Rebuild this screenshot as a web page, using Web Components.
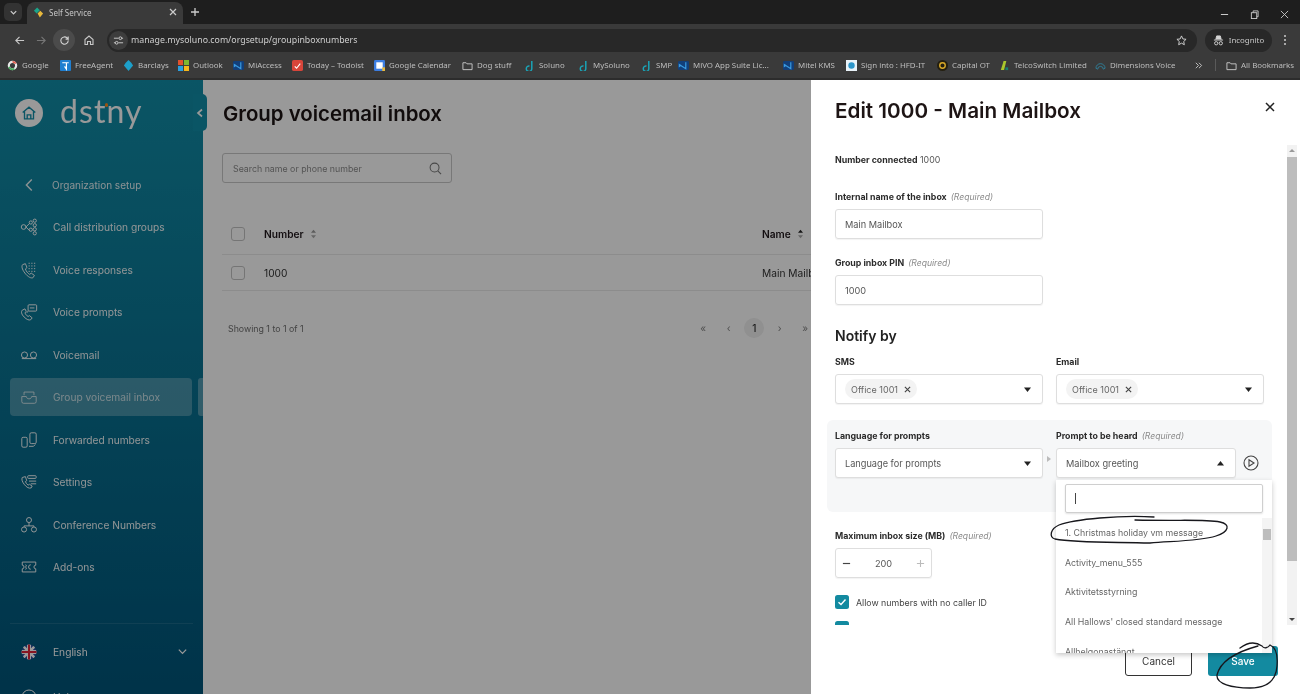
<!DOCTYPE html>
<html lang="en">
<head>
<meta charset="utf-8">
<title>Self Service</title>
<style>
    html, body { margin: 0; height: 100%; overflow: hidden; background: #fff; font-family: Inter, "Liberation Sans", sans-serif; }
</style>
</head>
<body>
<app-shell>
    <browser-chrome slot="chrome"></browser-chrome>
    <side-nav slot="nav">
        <nav-item icon="back" plain>Organization setup</nav-item>
        <nav-item icon="groups">Call distribution groups</nav-item>
        <nav-item icon="responses">Voice responses</nav-item>
        <nav-item icon="prompts">Voice prompts</nav-item>
        <nav-item icon="voicemail">Voicemail</nav-item>
        <nav-item icon="inbox" active>Group voicemail inbox</nav-item>
        <nav-item icon="forward">Forwarded numbers</nav-item>
        <nav-item icon="settings">Settings</nav-item>
        <nav-item icon="conference">Conference Numbers</nav-item>
        <nav-item icon="addons">Add-ons</nav-item>
    </side-nav>
    <inbox-page slot="main"></inbox-page>
    <edit-drawer slot="drawer"></edit-drawer>
    <ink-marks slot="ink"></ink-marks>
</app-shell>

<script>
const ICONS = {
    back: '<path d="M12 4l-6 6 6 6"/>',
    groups: '<circle cx="4" cy="10" r="2.6"/><path d="M6.6 10l4-4M6.6 10l4 4"/><circle cx="12" cy="5" r="1.8"/><circle cx="16.4" cy="3" r="1.8"/><circle cx="16.4" cy="8" r="1.8"/><circle cx="12" cy="13" r="1.8"/><circle cx="16.4" cy="12.5" r="1.8"/><circle cx="16.4" cy="17" r="1.8"/>',
    responses: '<path d="M3 4c-1.5 1.500-1 5 2.500 9.500s7 6 9 5l1.500-2.500-3.500-2.500-1.800 1.300c-2-1-4-3.500-4.700-6l1.800-1.500L6 3z"/><path stroke-dasharray="1.400 1.600" d="M9.500 2.500h8M9.500 5.500h8M9.500 8.500h8M9.500 11.500h8"/>',
    prompts: '<path d="M2.500 8c-1.500 1.500-1 4.500 2 7.500s5.500 4 7.500 3l1.500-2-3-2.500-1.500 1c-1.500-.8-3-2.500-3.500-4.200l1.500-1.300L5.500 6.500z"/><rect x="9" y="2" width="9.500" height="7" rx="1"/><path d="M9 9l-1.500 2M11 5.500h5"/>',
    voicemail: '<circle cx="5" cy="10" r="3.400"/><circle cx="15" cy="10" r="3.400"/><path d="M2 14h16"/>',
    inbox: '<path d="M4.500 8V4.500h11V8"/><path d="M2 9.500h5c.5 2 1.500 2.500 3 2.500s2.500-.5 3-2.500h5V15a2 2 0 0 1-2 2H4a2 2 0 0 1-2-2z"/>',
    forward: '<rect x="2" y="7" width="6" height="11" rx="1.500"/><rect x="11" y="2" width="7" height="12" rx="1.500"/><path d="M10 17h5l2-2"/>',
    settings: '<path d="M2.500 5c-1 2 0 5 2.500 8s5 4.500 7.500 3.500l1-2-3-2-1.500 1c-1.500-1-2.500-2.500-3-4l1.500-1L6 4z"/><rect x="8.500" y="3" width="9.500" height="3" rx="1"/><path d="M10 9h8M12 12h6"/>',
    conference: '<circle cx="10" cy="4.500" r="2.800"/><circle cx="4.500" cy="15" r="2.800"/><circle cx="15.500" cy="15" r="2.800"/><path d="M10 7.500V11M4.500 12V11h11v1"/>',
    addons: '<path d="M2.500 4.500h15v3.500a2 2 0 0 0 0 4v3.500h-15V12a2 2 0 0 0 0-4z"/><path d="M12 7.500a2.500 2.500 0 1 0 0 5"/><path d="M6 7.500c1.500 0 1.500 2 0 2.500 1.500.5 1.500 2.500 0 2.500"/>'
}

class AppShell extends HTMLElement {
    connectedCallback() {
        this.attachShadow({ mode: 'open' }).innerHTML = `
        <style>
            :host { display: flex; flex-direction: column; width: 1300px; height: 694px; position: relative; overflow: hidden; filter: blur(.5px); }
            .body { flex: 1; display: flex; min-height: 0; position: relative; }
            .scrim { position: absolute; left: 0; right: 0; top: 0; bottom: 0; background: rgba(0,0,0,.4); }
        </style>
        <slot name="chrome"></slot>
        <div class="body">
            <slot name="nav"></slot>
            <slot name="main"></slot>
            <div class="scrim"></div>
            <slot name="drawer"></slot>
        </div>
        <slot name="ink"></slot>
        `
    }
}
customElements.define('app-shell', AppShell)

class BookMark extends HTMLElement {
    connectedCallback() {
        this.attachShadow({ mode: 'open' }).innerHTML = `
        <style>
            :host { display: flex; align-items: center; gap: 4px; flex: none; width: ${this.getAttribute('w')}px; color: #bdbdbd; font-size: 7.9px; white-space: nowrap; overflow: hidden; }
            .ic { width: 11px; height: 11px; flex: none; display: block; }
        </style>
        <svg class="ic" viewBox="0 0 12 12">${this.getAttribute('art') || ''}</svg>
        <slot></slot>
        `
    }
}
customElements.define('book-mark', BookMark)

class BrowserChrome extends HTMLElement {
    connectedCallback() {
        const solu = '<path d="M8.500 1v8.500a3 3 0 1 1-2.500-3" fill="none" stroke="#1aa5b8" stroke-width="1.600"/>'
        const vs = '<rect x="0" y="1" width="12" height="10" rx="1.500" fill="#123f7a"/><path d="M8.500 2.500v7L3 6l-1.500 1V5L3 6" fill="none" stroke="#3a9be0" stroke-width="1.300"/>'
        const folder = '<path d="M1 3h3.500l1 1.200H11V10.500H1z" fill="none" stroke="#c9c9c9" stroke-width="1"/>'
        this.attachShadow({ mode: 'open' }).innerHTML = `
        <style>
            :host { display: block; flex: none; height: 80px; background: #3a3a3a; font-family: "Noto Sans", "Liberation Sans", sans-serif; color: #c6c6c6; }
            svg { display: block; flex: none; }
            .strip { height: 24px; background: #1e1e1e; display: flex; align-items: flex-end; padding-left: 4px; box-sizing: border-box; }
            .drop { width: 18px; height: 18px; margin-bottom: 3px; background: #333; border-radius: 5px; display: flex; align-items: center; justify-content: center; }
            .tab { width: 156px; height: 22px; margin-left: 5px; background: #3a3a3a; border-radius: 8px 8px 0 0; display: flex; align-items: center; box-sizing: border-box; padding: 0 6px 2px; font-size: 8px; gap: 5px; }
            .tab span { flex: 1; }
            .plus { margin: 0 0 7px 7px; }
            .win { margin-left: auto; display: flex; align-items: center; gap: 21px; padding: 0 11px 5px 0; }
            .tools { height: 32px; display: flex; align-items: center; padding-left: 8px; box-sizing: border-box; }
            .round { width: 22px; height: 22px; border-radius: 50%; display: flex; align-items: center; justify-content: center; }
            .reload { background: #4b4b4b; margin: 0 3px 0 1px; }
            .address { width: 1090px; margin-left: 7px; height: 23px; background: #282828; border-radius: 12px; display: flex; align-items: center; font-size: 8.8px; color: #cfcfcf; box-sizing: border-box; padding: 0 9px 0 2px; gap: 3px; }
            .address .tune { width: 19px; height: 19px; background: #3d3d3d; }
            .address span { flex: 1; }
            .incog { margin-left: 8px; width: 67px; height: 23px; background: #282828; border-radius: 12px; display: flex; align-items: center; justify-content: center; gap: 5px; font-size: 7.9px; }
            .marks { height: 18px; display: flex; align-items: center; padding-left: 7px; box-sizing: border-box; }
            .sep { width: 1px; height: 12px; background: #5a5a5a; margin: 0 10px 0 12px; flex: none; }
            .line { height: 2px; margin-top: 4px; background: #2c2c2c; }
        </style>
        <div class="strip">
            <div class="drop"><svg width="9" height="9" viewBox="0 0 10 10"><path d="M2 3.500l3 3 3-3" fill="none" stroke="#ccc" stroke-width="1.400"/></svg></div>
            <div class="tab">
                <svg width="11" height="11" viewBox="0 0 12 12"><path d="M1 4l3.500-3.500 3 3L4 7z" fill="#1ba58a"/><path d="M5 7l3-3 3 3-3.500 4.500z" fill="#e8b93c"/></svg>
                <span>Self Service</span>
                <svg width="8" height="8" viewBox="0 0 8 8"><path d="M1 1l6 6M7 1L1 7" stroke="#ccc" stroke-width="1.200"/></svg>
            </div>
            <svg class="plus" width="10" height="10" viewBox="0 0 10 10"><path d="M5 1v8M1 5h8" stroke="#ccc" stroke-width="1.300"/></svg>
            <div class="win">
                <svg width="9" height="9" viewBox="0 0 10 10"><path d="M1 5h8" stroke="#ccc" stroke-width="1.100"/></svg>
                <svg width="9" height="9" viewBox="0 0 10 10"><rect x="1.500" y="3" width="6" height="6.500" fill="none" stroke="#ccc"/><path d="M3.500 3V1H9v6.500H7.500" fill="none" stroke="#ccc"/></svg>
                <svg width="9" height="9" viewBox="0 0 10 10"><path d="M1 1l8 8M9 1L1 9" stroke="#ccc" stroke-width="1"/></svg>
            </div>
        </div>
        <div class="tools">
            <div class="round"><svg width="11" height="11" viewBox="0 0 12 12"><path d="M11 6H2M6 2L2 6l4 4" fill="none" stroke="#c8c8c8" stroke-width="1.200"/></svg></div>
            <div class="round"><svg width="11" height="11" viewBox="0 0 12 12"><path d="M1 6h9M6 2l4 4-4 4" fill="none" stroke="#767676" stroke-width="1.200"/></svg></div>
            <div class="round reload"><svg width="11" height="11" viewBox="0 0 12 12"><path d="M10 6a4 4 0 1 1-1.200-2.800L10 4.500V1.500M10 4.500H7.200" fill="none" stroke="#d4d4d4" stroke-width="1.200"/></svg></div>
            <div class="round"><svg width="12" height="12" viewBox="0 0 12 12"><path d="M2 5.500L6 2l4 3.500V10.500H7.500V7.500h-3v3H2z" fill="none" stroke="#c8c8c8" stroke-width="1.100"/></svg></div>
            <div class="address">
                <div class="round tune"><svg width="11" height="11" viewBox="0 0 12 12"><path d="M1 3.500h5M9.500 3.500H11M1 8.500h1.500M6 8.500h5" stroke="#d0d0d0"/><circle cx="8" cy="3.500" r="1.500" fill="none" stroke="#d0d0d0"/><circle cx="4" cy="8.500" r="1.500" fill="none" stroke="#d0d0d0"/></svg></div>
                <span>manage.mysoluno.com/orgsetup/groupinboxnumbers</span>
                <svg style="margin-right:1px" width="11" height="11" viewBox="0 0 12 12"><path d="M6 1l1.500 3.300 3.500.4-2.600 2.400.7 3.500L6 8.900l-3.100 1.700.7-3.500L1 4.700l3.500-.4z" fill="none" stroke="#d8d8d8"/></svg>
            </div>
            <div class="incog">
                <svg width="11" height="11" viewBox="0 0 12 12"><path d="M1 5.500h10M3 5l1-4h4l1 4" fill="#d4d4d4" stroke="#d4d4d4"/><circle cx="3.500" cy="9" r="1.800" fill="none" stroke="#d4d4d4"/><circle cx="8.500" cy="9" r="1.800" fill="none" stroke="#d4d4d4"/></svg>
                <span>Incognito</span>
            </div>
            <svg style="margin-left:11px" width="4" height="12" viewBox="0 0 4 12"><circle cx="2" cy="2" r="1" fill="#ccc"/><circle cx="2" cy="6" r="1" fill="#ccc"/><circle cx="2" cy="10" r="1" fill="#ccc"/></svg>
        </div>
        <div class="marks">
            <book-mark w="53" art='<circle cx="6" cy="6" r="4" fill="none" stroke="#e8e8e8" stroke-width="2.400"/><path d="M6 2a4 4 0 0 1 3.500 2" stroke="#e25b4b" stroke-width="2" fill="none"/><path d="M2.200 7.500A4 4 0 0 0 8 9.500" stroke="#4aa860" stroke-width="2" fill="none"/>'>Google</book-mark>
            <book-mark w="63" art='<rect width="12" height="12" rx="1" fill="#1f7fd1"/><path d="M2.500 3h7M7 3v7l-2-3" stroke="#fff" stroke-width="1.300" fill="none"/>'>FreeAgent</book-mark>
            <book-mark w="55" art='<path d="M6 0l3 3 2 3-5 6-5-6 2-3z" fill="#1d9fc9"/>'>Barclays</book-mark>
            <book-mark w="55" art='<rect width="5.500" height="5.500" fill="#e2512c"/><rect x="6.500" width="5.500" height="5.500" fill="#7eb72f"/><rect y="6.500" width="5.500" height="5.500" fill="#2a9fe0"/><rect x="6.500" y="6.500" width="5.500" height="5.500" fill="#f5b71c"/>'>Outlook</book-mark>
            <book-mark w="59" art='${vs}'>MiAccess</book-mark>
            <book-mark w="82" art='<rect width="12" height="12" rx="2" fill="#d8453a"/><path d="M3 7l2 2 4-5" stroke="#fff" fill="none" stroke-width="1.200"/>'>Today – Todoist</book-mark>
            <book-mark w="88" art='<rect width="12" height="12" rx="1.500" fill="#3c7de0"/><rect x="2.500" y="2.500" width="7" height="7" fill="#fff"/><rect x="9" y="8" width="3" height="4" fill="#e8b93c"/>'>Google Calendar</book-mark>
            <book-mark w="62" art='${folder}'>Dog stuff</book-mark>
            <book-mark w="54" art='${solu}'>Soluno</book-mark>
            <book-mark w="63" art='${solu}'>MySoluno</book-mark>
            <book-mark w="37" art='${solu}'>SMP</book-mark>
            <book-mark w="105" art='${vs}'>MiVO App Suite Lic...</book-mark>
            <book-mark w="63" art='${vs}'>Mitel KMS</book-mark>
            <book-mark w="91" art='<rect width="12" height="12" fill="#e8f2f8"/><circle cx="6" cy="6" r="3.500" fill="#2b95c9"/>'>Sign into : HFD-IT</book-mark>
            <book-mark w="62" art='<circle cx="6" cy="6" r="6" fill="#241f10"/><circle cx="6" cy="6" r="3" fill="none" stroke="#d9a928" stroke-width="1.500"/>'>Capital OT</book-mark>
            <book-mark w="96" art='<path d="M2 11L5 1h3L5.500 11z" fill="#a9c72c"/><rect x="7" y="8" width="3" height="3" fill="#16806f"/>'>TelcoSwitch Limited</book-mark>
            <book-mark w="99" art='<path d="M1 9a5 5 0 0 1 10 0l-2 1a3 3 0 0 0-6 0z" fill="none" stroke="#2f7f99"/>'>Dimensions Voice</book-mark>
            <svg width="9" height="9" viewBox="0 0 10 10"><path d="M2 2l3 3-3 3M5.500 2l3 3-3 3" fill="none" stroke="#ccc"/></svg>
            <div class="sep"></div>
            <book-mark w="70" art='${folder}'>All Bookmarks</book-mark>
        </div>
        <div class="line"></div>
        `
    }
}
customElements.define('browser-chrome', BrowserChrome)

class NavItem extends HTMLElement {
    connectedCallback() {
        const plain = this.hasAttribute('plain')
        this.attachShadow({ mode: 'open' }).innerHTML = `
        <style>
            :host { display: flex; align-items: center; height: 38px; border-radius: 4px; padding-left: 9.5px; gap: 15.5px; box-sizing: border-box; color: rgba(255,255,255,.95); font-size: 10.2px; white-space: nowrap; }
            :host([active]) { background: rgba(255,255,255,.26); color: rgba(255,255,255,.72); }
            :host([plain]) { font-size: 10px; color: rgba(255,255,255,.9); padding-left: 10.5px; gap: 13.5px; }
            svg { width: 18px; height: 18px; fill: none; stroke: currentColor; stroke-width: ${plain ? 1.6 : 1.1}; display: block; flex: none; }
        </style>
        <svg viewBox="0 0 20 20">${ICONS[this.getAttribute('icon')]}</svg>
        <slot></slot>
        `
    }
}
customElements.define('nav-item', NavItem)

class SideNav extends HTMLElement {
    connectedCallback() {
        this.attachShadow({ mode: 'open' }).innerHTML = `
        <style>
            :host { display: flex; flex-direction: column; flex: none; width: 203px; height: 100%; position: relative; box-sizing: border-box; background: linear-gradient(180deg, #128ea8 0%, #00557a 100%); color: #fff; overflow: visible; }
            .brand { height: 85.5px; display: flex; align-items: center; padding: 0 0 19px 15px; box-sizing: border-box; gap: 17px; flex: none; }
            .home { width: 28px; height: 28px; border-radius: 50%; background: #fff; display: flex; align-items: center; justify-content: center; }
            .word { font: 400 32px/1 Lato, "Liberation Sans", sans-serif; letter-spacing: 1.100px; position: relative; margin-top: -4px; }
            .dot { position: absolute; left: 44.5px; top: 8px; width: 3.500px; height: 3.500px; border-radius: 50%; background: #ff8a1e; }
            nav { display: flex; flex-direction: column; gap: 4.500px; padding: 0 11px 0 10px; flex: none; }
            .foot { flex: none; margin: 36.5px 10px 0; border-top: 1px solid rgba(255,255,255,.1); height: 56px; display: flex; align-items: center; padding: 0 5px 0 11px; gap: 16px; font-size: 10.200px; }
            .foot span { flex: 1; }
            .help { flex: none; display: flex; align-items: center; gap: 16px; padding-left: 21px; margin-top: 9px; font-size: 10.200px; }
            .handle { position: absolute; left: 193px; top: 14px; width: 14px; height: 37px; background: #128ea8; border-radius: 0 5px 5px 0; display: flex; align-items: center; justify-content: center; }
            .rail { position: absolute; left: 198px; top: 298px; width: 5px; height: 38px; background: rgba(255,255,255,.3); border-radius: 3px 0 0 3px; }
        </style>
        <div class="brand">
            <div class="home"><svg width="18" height="18" viewBox="0 0 20 20"><path d="M3 9.500L10 3.500l7 6M5 8v8.500h10V8M8 16.500V12h4v4.500" fill="none" stroke="#128ea8" stroke-width="1.500"/></svg></div>
            <div class="word">dstny<i class="dot"></i></div>
        </div>
        <nav><slot></slot></nav>
        <div class="foot">
            <svg width="16" height="16" viewBox="0 0 16 16"><defs><clipPath id="fc"><circle cx="8" cy="8" r="7.500"/></clipPath></defs><g clip-path="url(#fc)"><rect width="16" height="16" fill="#2d4f9e"/><path d="M0 0l16 16M16 0L0 16" stroke="#fff" stroke-width="2.500"/><path d="M8 0v16M0 8h16" stroke="#fff" stroke-width="4"/><path d="M8 0v16M0 8h16" stroke="#e0263a" stroke-width="2"/></g></svg>
            <span>English</span>
            <svg width="11" height="11" viewBox="0 0 12 12"><path d="M2 4l4 4 4-4" fill="none" stroke="#fff" stroke-width="1.400"/></svg>
        </div>
        <div class="help"><svg width="16" height="16" viewBox="0 0 16 16"><circle cx="8" cy="8" r="7" fill="none" stroke="#fff"/></svg><span>Help</span></div>
        <div class="handle"><svg width="10" height="10" viewBox="0 0 10 10"><path d="M7 1.500L3 5l4 3.500" fill="none" stroke="#fff" stroke-width="1.700"/></svg></div>
        <div class="rail"></div>
        `
    }
}
customElements.define('side-nav', SideNav)

class InboxPage extends HTMLElement {
    connectedCallback() {
        const sort = up => `<svg width="7" height="10" viewBox="0 0 8 12"><path d="M4 1l3 3.500H1z" fill="${up ? '#222' : '#999'}"/><path d="M4 11L1 7.500h6z" fill="#aaa"/></svg>`
        this.attachShadow({ mode: 'open' }).innerHTML = `
        <style>
            :host { display: block; flex: 1; min-width: 0; background: #fff; padding: 20px 0 0 19px; box-sizing: border-box; color: #222; overflow: hidden; }
            h1 { font-size: 20.4px; line-height: 28px; font-weight: 600; margin: 0 0 25px 1px; color: #1d1414; }
            .search { width: 230px; height: 30px; border: 1px solid #c8c8c8; border-radius: 3px; display: flex; align-items: center; justify-content: space-between; box-sizing: border-box; padding: 0 9px 0 10px; font-size: 8.800px; color: #8c8c8c; }
            .grid { width: 600px; display: grid; grid-template-columns: 42px 498px 60px; align-items: center; border-bottom: 1px solid #eaeaea; box-sizing: border-box; white-space: nowrap; font-size: 10.200px; }
            .head { margin-top: 31px; height: 41px; font-weight: 600; color: #20171b; }
            .row { height: 36px; color: #333; }
            .box { width: 14px; height: 14px; margin-left: 9px; border: 1px solid #c4c4c4; border-radius: 3px; box-sizing: border-box; }
            .lab { display: flex; align-items: center; gap: 6px; }
            .pagebar { width: 596px; display: flex; justify-content: space-between; align-items: center; height: 26px; margin-top: 24px; padding-left: 6px; box-sizing: border-box; font-size: 8.800px; color: #6f6f6f; }
            .pager { display: flex; position: relative; z-index: 0; }
            .pager b { width: 25.500px; height: 20px; display: flex; align-items: center; justify-content: center; font-weight: 400; font-size: 10px; color: #888; position: relative; }
            .pager b.on { color: #333; font-weight: 500; }
            .pager b.on::before { content: ""; position: absolute; left: 2.750px; top: 0; width: 20px; height: 20px; border-radius: 50%; background: #f0f0f0; z-index: -1; }
        </style>
        <h1>Group voicemail inbox</h1>
        <div class="search">
            <span>Search name or phone number</span>
            <svg width="13" height="13" viewBox="0 0 14 14"><circle cx="6" cy="6" r="4.800" fill="none" stroke="#777" stroke-width="1.100"/><path d="M9.500 9.500L13 13" stroke="#777" stroke-width="1.100"/></svg>
        </div>
        <div class="grid head">
            <div class="box"></div>
            <div class="lab">Number ${sort(false)}</div>
            <div class="lab">Name ${sort(true)}</div>
        </div>
        <div class="grid row">
            <div class="box"></div>
            <div>1000</div>
            <div>Main Mailbox</div>
        </div>
        <div class="pagebar">
            <span>Showing 1 to 1 of 1</span>
            <div class="pager"><b>«</b><b>‹</b><b class="on">1</b><b>›</b><b>»</b></div>
        </div>
        `
    }
}
customElements.define('inbox-page', InboxPage)

class FormField extends HTMLElement {
    connectedCallback() {
        const note = this.hasAttribute('required') ? '<em>(Required)</em>' : ''
        this.attachShadow({ mode: 'open' }).innerHTML = `
        <style>
            :host { display: block; }
            label { display: block; height: 14px; line-height: 14px; margin-bottom: 5px; font-size: 8.800px; font-weight: 700; color: #2b2b2b; white-space: nowrap; }
            em { font-weight: 400; color: #8a8a8a; margin-left: 4px; font-size: 8.600px; }
        </style>
        <label>${this.getAttribute('label')}${note}</label>
        <slot></slot>
        `
    }
}
customElements.define('form-field', FormField)

class SelectBox extends HTMLElement {
    connectedCallback() {
        const open = this.hasAttribute('open')
        const caret = open ? 'M3.500 1l3.500 4.500H0z' : 'M3.500 6L0 1.500h7z'
        this.attachShadow({ mode: 'open' }).innerHTML = `
        <style>
            :host { display: flex; align-items: center; justify-content: space-between; height: 30px; box-sizing: border-box; background: #fff; border: 1px solid #dedede; border-radius: 3px; padding: 0 11px 0 9px; font-size: 9.200px; color: #555; white-space: nowrap; box-shadow: 0 1px 1px rgba(0,0,0,.05); }
            .left { display: flex; align-items: center; }
            svg { display: block; flex: none; }
        </style>
        <div class="left"><slot></slot></div>
        <svg width="7" height="7" viewBox="0 0 7 7"><path d="${caret}" fill="#222"/></svg>
        `
    }
}
customElements.define('select-box', SelectBox)

class TagChip extends HTMLElement {
    connectedCallback() {
        this.attachShadow({ mode: 'open' }).innerHTML = `
        <style>
            :host { display: inline-flex; align-items: center; gap: 6px; height: 20px; padding: 0 6px; background: #f3f3f3; border-radius: 10px; font-size: 9px; color: #666; }
        </style>
        <slot></slot>
        <svg width="7" height="7" viewBox="0 0 8 8"><path d="M1 1l6 6M7 1L1 7" stroke="#444" stroke-width="1.300"/></svg>
        `
    }
}
customElements.define('tag-chip', TagChip)

class PromptMenu extends HTMLElement {
    connectedCallback() {
        this.attachShadow({ mode: 'open' }).innerHTML = `
        <style>
            :host { position: absolute; left: 245px; top: 400px; width: 216px; height: 173px; background: #fff; box-sizing: border-box; box-shadow: 0 2px 5px rgba(0,0,0,.22); overflow: hidden; font-size: 8.800px; color: #666; }
            .find { margin: 4px 9px 0; height: 29px; border: 1px solid #cfcfcf; border-radius: 2px; box-sizing: border-box; display: flex; align-items: center; padding-left: 9px; box-shadow: 0 1px 2px rgba(0,0,0,.12); }
            .find i { width: 1px; height: 11px; background: #444; }
            .wrap { display: flex; margin-top: 5px; height: 135px; }
            ul { flex: 1; list-style: none; margin: 0; padding: 0 0 0 9px; overflow: hidden; }
            li { height: 29.700px; line-height: 29.700px; white-space: nowrap; }
            .bar { width: 10px; flex: none; background: #f4f4f4; position: relative; }
            .bar::before { content: ""; display: block; height: 11px; background: #bdbdbd; margin: 11px 1px 0; }
        </style>
        <div class="find"><i></i></div>
        <div class="wrap">
            <ul>
                <li>1. Christmas holiday vm message</li>
                <li>Activity_menu_555</li>
                <li>Aktivitetsstyrning</li>
                <li>All Hallows' closed standard message</li>
                <li>Allhelgonastängt</li>
            </ul>
            <div class="bar"></div>
        </div>
        `
    }
}
customElements.define('prompt-menu', PromptMenu)

class EditDrawer extends HTMLElement {
    connectedCallback() {
        this.attachShadow({ mode: 'open' }).innerHTML = `
        <style>
            :host { position: absolute; right: 0; top: 0; bottom: 0; width: 489px; background: #fff; display: flex; flex-direction: column; color: #2b2b2b; }
            header { height: 65px; flex: none; display: flex; justify-content: space-between; align-items: flex-start; padding: 17px 25px 0 24px; box-sizing: border-box; }
            h2 { margin: 0; font-size: 20.7px; line-height: 28px; font-weight: 600; color: #1d1414; }
            .close { margin-top: 5px; }
            .mid { flex: 1; min-height: 0; display: flex; }
            .scroll { flex: 1; min-width: 0; overflow: hidden; padding: 8px 0 0 24px; box-sizing: border-box; }
            .track { width: 10px; margin-right: 3px; flex: none; background: #f2f2f2; position: relative; }
            .thumb { margin-top: 12px; height: 404px; background: #bdbdbd; }
            .up, .dn { position: absolute; left: 2px; width: 0; height: 0; border-left: 3px solid transparent; border-right: 3px solid transparent; }
            .up { top: 4px; border-bottom: 3px solid #999; }
            .dn { bottom: 4px; border-top: 3px solid #444; }
            .conn { height: 14px; line-height: 14px; font-size: 8.800px; margin-bottom: 23px; }
            .conn b { font-weight: 700; }
            .conn span { color: #555; }
            .input { width: 208px; height: 30px; box-sizing: border-box; border: 1px solid #dedede; border-radius: 3px; display: flex; align-items: center; padding-left: 9px; font-size: 9.200px; color: #555; box-shadow: 0 1px 1px rgba(0,0,0,.05); }
            .gap { margin-top: 17px; }
            h3 { margin: 21px 0 9px; font-size: 14px; line-height: 20px; font-weight: 600; color: #222; }
            .two { display: grid; grid-template-columns: 208px 208px; column-gap: 13px; }
            .panel { margin: 16px 0 0 -8px; width: 445px; height: 92px; background: #f6f7f8; border-radius: 6px; padding: 9px 0 0 8px; box-sizing: border-box; display: grid; grid-template-columns: 208px 180px 28px; column-gap: 13px; }
            .split { position: relative; }
            .split::before { content: ""; position: absolute; left: -9px; top: 27px; border-left: 4px solid #bbb; border-top: 3px solid transparent; border-bottom: 3px solid transparent; }
            .play { padding-top: 26px; margin-left: -6px; }
            .stepper { width: 97px; height: 30px; box-sizing: border-box; border: 1px solid #dedede; border-radius: 3px; display: flex; align-items: center; justify-content: space-between; padding: 0 6px; font-size: 9.200px; color: #555; box-shadow: 0 1px 1px rgba(0,0,0,.05); }
            .check { display: flex; align-items: center; gap: 7px; margin-top: 17px; font-size: 8.800px; color: #444; height: 14px; }
            .check + .check { margin-top: 12px; }
            .tick { width: 14px; height: 14px; background: #138aa0; border-radius: 2.500px; display: flex; align-items: center; justify-content: center; }
            footer { height: 69px; flex: none; display: flex; justify-content: flex-end; gap: 16px; padding: 21px 22px 0 0; box-sizing: border-box; }
            .btn { height: 30px; border-radius: 3px; display: flex; align-items: center; justify-content: center; box-sizing: border-box; font-size: 10px; }
            .cancel { width: 67px; border: 1px solid #333; color: #333; background: #fff; }
            .save { width: 70px; background: #138aa0; color: #fff; font-weight: 500; }
        </style>
        <header>
            <h2>Edit 1000 - Main Mailbox</h2>
            <svg class="close" width="10" height="10" viewBox="0 0 10 10"><path d="M1 1l8 8M9 1L1 9" stroke="#222" stroke-width="1.500"/></svg>
        </header>
        <div class="mid">
            <div class="scroll">
                <div class="conn"><b>Number connected</b> <span>1000</span></div>
                <form-field label="Internal name of the inbox" required><div class="input">Main Mailbox</div></form-field>
                <form-field class="gap" label="Group inbox PIN" required><div class="input">1000</div></form-field>
                <h3>Notify by</h3>
                <div class="two">
                    <form-field label="SMS"><select-box><tag-chip>Office 1001</tag-chip></select-box></form-field>
                    <form-field label="Email"><select-box><tag-chip>Office 1001</tag-chip></select-box></form-field>
                </div>
                <div class="panel">
                    <form-field label="Language for prompts"><select-box>Language for prompts</select-box></form-field>
                    <form-field class="split" label="Prompt to be heard" required><select-box open>Mailbox greeting</select-box></form-field>
                    <div class="play"><svg width="16" height="16" viewBox="0 0 16 16"><circle cx="8" cy="8" r="7" fill="none" stroke="#444" stroke-width="1.100"/><path d="M6 4.800L11 8l-5 3.200z" fill="none" stroke="#444" stroke-width="1.100"/></svg></div>
                </div>
                <form-field class="gap" label="Maximum inbox size (MB)" required>
                    <div class="stepper">
                        <svg width="9" height="9" viewBox="0 0 10 10"><path d="M1 5h8" stroke="#444" stroke-width="1.300"/></svg>
                        <span>200</span>
                        <svg width="9" height="9" viewBox="0 0 10 10"><path d="M1 5h8M5 1v8" stroke="#bbb" stroke-width="1.200"/></svg>
                    </div>
                </form-field>
                <div class="check"><div class="tick"><svg width="10" height="10" viewBox="0 0 10 10"><path d="M1.500 5.200L4 7.500 8.500 2.500" fill="none" stroke="#fff" stroke-width="1.400"/></svg></div>Allow numbers with no caller ID</div>
                <div class="check"><div class="tick"></div></div>
            </div>
            <div class="track"><i class="up"></i><div class="thumb"></div><i class="dn"></i></div>
        </div>
        <footer>
            <div class="btn cancel">Cancel</div>
            <div class="btn save">Save</div>
        </footer>
        <prompt-menu></prompt-menu>
        `
    }
}
customElements.define('edit-drawer', EditDrawer)

// pen marks someone drew on top of the screenshot
class InkMarks extends HTMLElement {
    connectedCallback() {
        this.attachShadow({ mode: 'open' }).innerHTML = `
        <style>
            :host { position: absolute; left: 0; top: 0; width: 1300px; height: 694px; pointer-events: none; }
            svg { display: block; }
            path { fill: none; stroke: #17171c; stroke-width: 1.300; stroke-linecap: round; }
        </style>
        <svg width="1300" height="694" viewBox="0 0 1300 694">
            <path d="M1154 517C1120 515 1075 519 1059 525C1050 529 1049 537 1055 539C1075 543 1110 542 1150 543C1175 541 1200 541 1216 536C1229 532 1231 524 1220 522C1205 519 1185 521 1135 520"/>
            <path d="M1258 646C1236 652 1220 662 1217 675C1216 684 1232 688 1250 688C1266 688 1276 682 1277 666C1278 654 1275 647 1270 645C1268 648 1264 649 1262 646C1256 642 1248 642 1240 648"/>
        </svg>
        `
    }
}
customElements.define('ink-marks', InkMarks)
</script>
</body>
</html>
